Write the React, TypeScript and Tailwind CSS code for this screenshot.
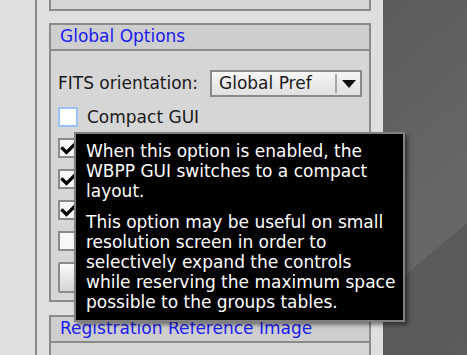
import React from "react";

function CheckBox({ checked = false, focus = false }: { checked?: boolean; focus?: boolean }) {
  return (
    <div
      className={`w-[20px] h-[20px] shrink-0 border-2 relative ${
        focus ? "border-[#9ec0f7] bg-white" : "border-[#8a8a8a] bg-[#f7f7f7]"
      }`}
    >
      {checked && (
        <svg
          viewBox="0 0 20 20"
          className="absolute left-[-1px] top-[-1px] w-[20px] h-[20px]"
        >
          <path
            d="M3.5 9.5 L7.5 13.5 L15.5 5.5"
            fill="none"
            stroke="#000"
            strokeWidth="3.2"
            strokeLinecap="square"
          />
        </svg>
      )}
    </div>
  );
}

// label is optional: rows under the tooltip show only their checkbox
function OptionRow({
  label,
  checked,
  focus,
}: {
  label?: string;
  checked?: boolean;
  focus?: boolean;
}) {
  return (
    <div className="h-[20px] flex items-center gap-[9px]">
      <CheckBox checked={checked} focus={focus} />
      {label && <span className="whitespace-nowrap leading-[20px]">{label}</span>}
    </div>
  );
}

export default function App() {
  return (
    <div className="w-[467px] h-[355px] flex overflow-hidden relative font-['DejaVu_Sans',sans-serif] text-[17px] text-[#1a1a1a]">
      {/* Left strip */}
      <div className="w-[35px] shrink-0 bg-[#dfdfdf]"></div>
      <div className="w-[2px] shrink-0 bg-[#8a8a8a]"></div>

      {/* Panel column */}
      <div className="w-[346px] shrink-0 bg-[#dfdfdf] px-[12px] flex flex-col">
        {/* Previous section (cut off) */}
        <div className="h-[11px] shrink-0 border-x-2 border-b-2 border-[#8a8a8a] bg-[#d6d6d6]"></div>

        {/* Global Options */}
        <div className="mt-[12px] shrink-0 border-2 border-[#8a8a8a] flex flex-col">
          <div className="h-[26px] bg-[#cecece] border-b-2 border-[#8a8a8a] px-[9px] leading-[23px] text-[#1c1cf0]">
            Global Options
          </div>
          <div className="bg-[#d6d6d6] px-[7px] pt-[19px] pb-[7px] flex flex-col">
            <div className="h-[27px] flex items-center justify-between">
              <span className="whitespace-nowrap">FITS orientation:</span>
              <div className="w-[152px] h-[27px] border-2 border-[#8a8a8a] bg-[linear-gradient(#f6f6f6,#e0e0e0)] flex items-center">
                <span className="flex-1 pl-[7px] whitespace-nowrap leading-[23px]">
                  Global Pref
                </span>
                <div className="w-[2px] h-[23px] py-[2px] flex">
                  <div className="w-[2px] bg-[#a8a8a8]"></div>
                </div>
                <div className="w-[23px] h-full flex items-center justify-center">
                  <svg viewBox="0 0 14 8" className="w-[14px] h-[8px]">
                    <path d="M0 0 L14 0 L7 8 Z" fill="#111" />
                  </svg>
                </div>
              </div>
            </div>

            <div className="mt-[10px] flex flex-col gap-[11px]">
              <OptionRow label="Compact GUI" focus />
              <OptionRow checked />
              <OptionRow checked />
              <OptionRow checked />
              <OptionRow />
              <button className="w-[140px] h-[31px] border-2 border-[#8a8a8a] rounded-[2px] bg-[linear-gradient(#fbfbfb,#d4d4d4)]"></button>
            </div>
          </div>
        </div>

        {/* Registration Reference Image */}
        <div className="mt-[13px] flex-1 border-x-2 border-t-2 border-[#8a8a8a] flex flex-col">
          <div className="h-[26px] shrink-0 bg-[#cecece] border-b-2 border-[#8a8a8a] px-[9px] leading-[23px] text-[#1c1cf0] whitespace-nowrap">
            Registration Reference Image
          </div>
          <div className="flex-1 bg-[#d6d6d6]"></div>
        </div>
      </div>

      {/* Desktop background */}
      <div className="flex-1 bg-[linear-gradient(140deg,#5c5c5c_0%,#666666_55%,#676767_69%,#5a5a5a_69%,#5c5c5c_100%)]"></div>

      {/* Tooltip */}
      <div className="absolute left-[74px] top-[132px] w-[331px] h-[190px] border-2 border-[#808080] bg-black px-[10px] pt-[7px] text-white leading-[20px] whitespace-nowrap shadow-[3px_3px_4px_rgba(0,0,0,0.45)]">
        <p>
          When this option is enabled, the
          <br />
          WBPP GUI switches to a compact
          <br />
          layout.
        </p>
        <p className="mt-[11px]">
          This option may be useful on small
          <br />
          resolution screen in order to
          <br />
          selectively expand the controls
          <br />
          while reserving the maximum space
          <br />
          possible to the groups tables.
        </p>
      </div>
    </div>
  );
}
